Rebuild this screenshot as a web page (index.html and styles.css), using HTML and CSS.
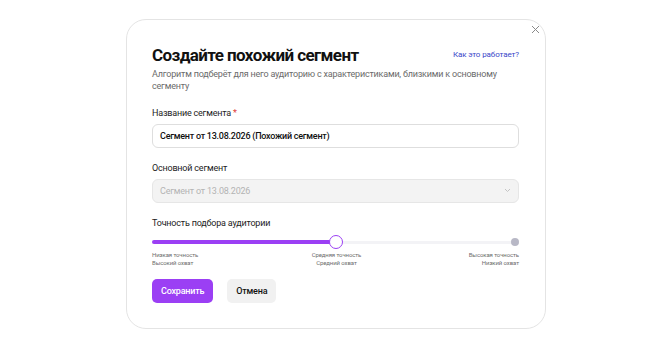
FILE: index.html
```html
<!DOCTYPE html>
<html lang="ru">
<head>
    <meta charset="UTF-8">
    <meta name="viewport" content="width=device-width, initial-scale=1.0">
    <title>Похожий сегмент</title>
    <link rel="stylesheet" href="styles.css">
</head>
<body>
    <div class="page">
        <div class="modal">
            <button class="close" aria-label="Закрыть">
                <svg width="9" height="9" viewBox="0 0 9 9"><path d="M1 1L8 8M8 1L1 8" stroke="#8a8a8a" stroke-width="1" fill="none"/></svg>
            </button>

            <div class="head">
                <h1>Создайте похожий сегмент</h1>
                <a href="#" class="help">Как это работает?</a>
            </div>
            <p class="desc">Алгоритм подберёт для него аудиторию с характеристиками, близкими к основному сегменту</p>

            <label class="label">Название сегмента <span class="req">*</span></label>
            <div class="input">Сегмент от 13.08.2026 (Похожий сегмент)</div>

            <label class="label">Основной сегмент</label>
            <div class="select">
                <span>Сегмент от 13.08.2026</span>
                <svg width="7" height="5" viewBox="0 0 7 5"><path d="M1 1L3.5 3.5L6 1" stroke="#c4c4c4" stroke-width="1" fill="none"/></svg>
            </div>

            <label class="label">Точность подбора аудитории</label>
            <div class="slider">
                <div class="track"></div>
                <div class="fill"></div>
                <div class="thumb"></div>
                <div class="end"></div>
            </div>
            <div class="ticks">
                <div>Низкая точность<br>Высокий охват</div>
                <div class="mid">Средняя точность<br>Средний охват</div>
                <div class="right">Высокая точность<br>Низкий охват</div>
            </div>

            <div class="actions">
                <button class="btn primary">Сохранить</button>
                <button class="btn">Отмена</button>
            </div>
        </div>
    </div>
</body>
</html>
```
FILE: styles.css
```css
body { margin: 0; background: #fff; font-family: Roboto, "Noto Sans", sans-serif; color: #111; letter-spacing: -0.2px; }
.page { height: 347px; display: flex; align-items: center; justify-content: center; }
.modal { position: relative; width: 420px; height: 310px; box-sizing: border-box; border: 1px solid #e4e4e4; border-radius: 20px; padding: 24px 26px 0 25px; }
.close { position: absolute; top: 0; right: 0; width: 20px; height: 20px; border: none; background: none; padding: 0; display: flex; align-items: center; justify-content: center; }
.head { display: flex; justify-content: space-between; align-items: center; }
h1 { margin: 0; font-size: 17px; line-height: 22px; font-weight: 700; letter-spacing: -0.6px; }
.help { font-size: 8px; color: #3a47c9; text-decoration: none; letter-spacing: -0.1px; }
.desc { margin: 2px 0 0; font-size: 9px; line-height: 12px; color: #6b6b6b; width: 360px; }
.label { display: block; margin-top: 14px; font-size: 9px; line-height: 12px; color: #1d1d1d; }
.desc + .label { margin-top: 15px; }
.req { color: #e0413a; }
.input { margin-top: 5px; height: 24px; box-sizing: border-box; border: 1px solid #dedede; border-radius: 6px; padding: 0 7px; display: flex; align-items: center; font-size: 9px; font-weight: 500; letter-spacing: -0.25px; }
.select { margin-top: 5px; height: 24px; box-sizing: border-box; border: 1px solid #e6e6e6; background: #f3f3f3; border-radius: 6px; padding: 0 7px; display: flex; align-items: center; justify-content: space-between; font-size: 9px; color: #b3b3b3; }
.slider { position: relative; height: 14px; margin-top: 6px; }
.track { position: absolute; left: 0; right: 0; top: 6px; height: 3px; background: #f3f3f6; border-radius: 2px; }
.fill { position: absolute; left: 0; width: 184px; top: 5px; height: 4px; background: #9b3ff4; border-radius: 2px; }
.thumb { position: absolute; left: 177px; top: 0; width: 12px; height: 12px; border: 1.5px solid #9b3ff4; background: #fff; border-radius: 50%; }
.end { position: absolute; right: 0; top: 3px; width: 8px; height: 8px; background: #b8b8c6; border-radius: 50%; }
.ticks { display: flex; justify-content: space-between; margin-top: 2px; font-size: 6px; line-height: 8px; color: #6e6e6e; letter-spacing: -0.1px; }
.ticks .mid { text-align: center; margin-left: 6px; }
.ticks .right { text-align: right; }
.actions { display: flex; gap: 14px; margin-top: 12px; }
.btn { height: 24px; border: none; border-radius: 5px; background: #f1f1f1; font-family: inherit; font-size: 9px; font-weight: 500; color: #111; padding: 0 9px; letter-spacing: -0.2px; }
.btn.primary { background: #9b3ff4; color: #fff; }
```
